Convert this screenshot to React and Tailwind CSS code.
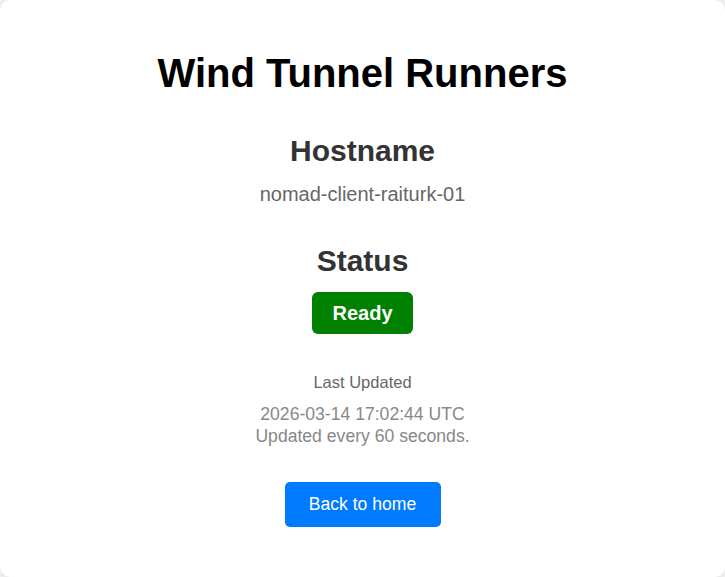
export default function App() {
    return (
        <div className="min-h-screen bg-[#f4f4f4] font-['Liberation_Sans',Arial,sans-serif]">
            <div className="flex h-[577px] w-full flex-col items-center rounded-[10px] bg-white pt-[49px] text-center shadow-[0_0_10px_rgba(0,0,0,0.1)]">
                <h1 className="text-[40px] font-bold leading-[48px] text-black">Wind Tunnel Runners</h1>

                <h2 className="mt-[36px] text-[30px] font-bold leading-[36px] text-[#333]">Hostname</h2>
                <p className="mt-[13px] text-[20px] leading-[24px] text-[#666]">nomad-client-raiturk-01</p>

                <h2 className="mt-[37px] text-[30px] font-bold leading-[36px] text-[#333]">Status</h2>
                <span className="mt-[13px] inline-block rounded-[6px] bg-[#008000] px-[20px] py-[9px] text-[20px] font-bold leading-[24px] text-white">
                    Ready
                </span>

                <p className="mt-[39px] text-[16.5px] leading-[19px] text-[#666]">Last Updated</p>
                <div className="mt-[11px] text-[17.6px] leading-[22px] text-[#888]">
                    <div>2026-03-14 17:02:44 UTC</div>
                    <div>Updated every 60 seconds.</div>
                </div>

                <a
                    href="#"
                    className="mt-[35px] flex h-[45px] w-[156px] items-center justify-center rounded-[5px] bg-[#007bff] text-[17.6px] leading-[21px] text-white"
                >
                    Back to home
                </a>
            </div>
        </div>
    );
}
